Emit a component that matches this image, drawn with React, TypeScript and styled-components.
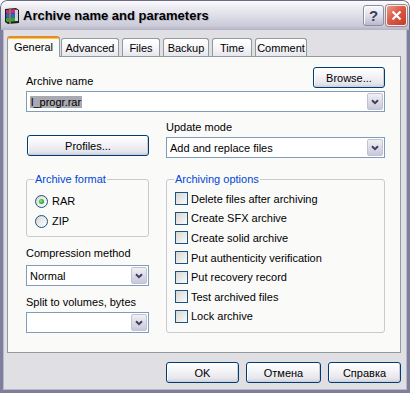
import React from "react";
import styled, { createGlobalStyle, css } from "styled-components";

const GlobalStyle = createGlobalStyle`
  html, body {
    margin: 0;
    padding: 0;
    background: #ffffff;
  }
  body {
    font-family: "Liberation Sans", Arial, sans-serif;
    font-size: 11px;
    color: #000;
  }
  * {
    box-sizing: border-box;
  }
`;

const tabs = [
  { label: "General", w: 53 },
  { label: "Advanced", w: 58 },
  { label: "Files", w: 38 },
  { label: "Backup", w: 46 },
  { label: "Time", w: 40 },
  { label: "Comment", w: 52 },
];

const options = [
  "Delete files after archiving",
  "Create SFX archive",
  "Create solid archive",
  "Put authenticity verification",
  "Put recovery record",
  "Test archived files",
  "Lock archive",
];

const Chevron = () => (
  <svg width="8" height="6" viewBox="0 0 8 6">
    <polyline points="1,1.2 4,4.2 7,1.2" fill="none" stroke="#3f3f5f" strokeWidth="2" />
  </svg>
);

const RarIcon = () => (
  <svg width="18" height="18" viewBox="0 0 18 18">
    <polygon points="2,2 13,1 16,3 16,16 5,17 2,15" fill="#1e1e1e" />
    <polygon points="3,3 13,2 15,3 15,6 4,7 3,6" fill="#c2307e" />
    <polygon points="3,7 14,6 15,7 15,10 4,11 3,10" fill="#2e62cc" />
    <polygon points="3,11 14,10 15,11 15,14 4,15 3,14" fill="#36a43e" />
    <rect x="12" y="3" width="3" height="11" fill="#e6e6e6" opacity="0.85" />
    <rect x="6" y="1" width="2" height="16" fill="#8c7a52" />
  </svg>
);

const App: React.FC = () => {
  return (
    <>
      <GlobalStyle />
      <Window>
        <TitleBar>
          <RarIcon />
          <Title>Archive name and parameters</Title>
          <HelpButton>?</HelpButton>
          <CloseButton>
            <svg width="11" height="11" viewBox="0 0 11 11">
              <path d="M1.5 1.5 L9.5 9.5 M9.5 1.5 L1.5 9.5" stroke="#ffffff" strokeWidth="2.2" />
            </svg>
          </CloseButton>
        </TitleBar>

        <Body>
          <TabStrip>
            {tabs.map((t, i) => (
              <Tab key={t.label} $w={t.w} $active={i === 0}>
                {t.label}
              </Tab>
            ))}
          </TabStrip>

          <Panel>
            <NameRow>
              <Label>Archive name</Label>
              <Button $w={72}>Browse...</Button>
            </NameRow>
            <Combo $mt={3}>
              <ComboText>
                <Selected>l_progr.rar</Selected>
              </ComboText>
              <DropButton>
                <Chevron />
              </DropButton>
            </Combo>

            <Columns>
              <Column>
                <Button $w={122} $mt={23} $ml={1}>
                  Profiles...
                </Button>
                <Group $h={64} $mt={17}>
                  <GroupTitle>Archive format</GroupTitle>
                  <OptionList $pt={5}>
                    <OptionRow $h={20}>
                      <Radio $checked />
                      <OptionText $gap={4}>RAR</OptionText>
                    </OptionRow>
                    <OptionRow $h={20}>
                      <Radio />
                      <OptionText $gap={4}>ZIP</OptionText>
                    </OptionRow>
                  </OptionList>
                </Group>
                <Label $mt={10}>Compression method</Label>
                <Combo $mt={5}>
                  <ComboText>Normal</ComboText>
                  <DropButton>
                    <Chevron />
                  </DropButton>
                </Combo>
                <Label $mt={10}>Split to volumes, bytes</Label>
                <Combo $mt={3}>
                  <ComboText />
                  <DropButton>
                    <Chevron />
                  </DropButton>
                </Combo>
              </Column>

              <Column>
                <Label $mt={9}>Update mode</Label>
                <Combo $mt={3}>
                  <ComboText>Add and replace files</ComboText>
                  <DropButton>
                    <Chevron />
                  </DropButton>
                </Combo>
                <Group $h={160} $mt={15}>
                  <GroupTitle>Archiving options</GroupTitle>
                  <OptionList $pt={3}>
                    {options.map((o) => (
                      <OptionRow key={o} $h={19.6}>
                        <CheckBox />
                        <OptionText $gap={3}>{o}</OptionText>
                      </OptionRow>
                    ))}
                  </OptionList>
                </Group>
              </Column>
            </Columns>
          </Panel>

          <Footer>
            <Button $w={73}>OK</Button>
            <Button $w={75}>Отмена</Button>
            <Button $w={73}>Справка</Button>
          </Footer>
        </Body>
      </Window>
    </>
  );
};

const Window = styled.div`
  width: 410px;
  height: 393px;
  display: flex;
  flex-direction: column;
  border-radius: 7px 7px 0 0;
  overflow: hidden;
  background: #e0dfe3;
`;

const TitleBar = styled.div`
  height: 30px;
  flex: none;
  display: flex;
  align-items: center;
  padding: 0 2px 0 2px;
  border: 1px solid #6c6c88;
  border-bottom: none;
  border-radius: 7px 7px 0 0;
  background: linear-gradient(
    #fcfcfe 0%,
    #ececf2 22%,
    #dcdce6 55%,
    #cbcbd9 85%,
    #b3b3c6 100%
  );
`;

const Title = styled.div`
  flex: 1;
  margin-left: 2px;
  font-size: 13px;
  font-weight: bold;
  color: #000;
  text-shadow: 1px 1px 0 #b9b9c8;
  white-space: nowrap;
`;

const CaptionButton = styled.div`
  width: 21px;
  height: 21px;
  border-radius: 3px;
  display: flex;
  align-items: center;
  justify-content: center;
`;

const HelpButton = styled(CaptionButton)`
  margin-right: 2px;
  border: 1px solid #8c8ca8;
  background: linear-gradient(#f8f8fb 0%, #dcdce6 55%, #b9b9cc 100%);
  box-shadow: inset 1px 1px 0 #ffffff;
  font-size: 15px;
  font-weight: bold;
  color: #3a3a5a;
`;

const CloseButton = styled(CaptionButton)`
  border: 1px solid #f4f0f0;
  background: linear-gradient(135deg, #ee9a88 0%, #dc5a46 45%, #c23b28 100%);
  box-shadow: 0 0 0 1px #9a8a90;
`;

const Body = styled.div`
  flex: 1;
  display: flex;
  flex-direction: column;
  padding: 6px 6px 7px 4px;
  border: 3px solid #7f7f9c;
  border-top: none;
  box-shadow: inset 1px 0 0 #b8b8cc, inset -1px 0 0 #b8b8cc, inset 0 -1px 0 #b8b8cc;
`;

const TabStrip = styled.div`
  height: 20px;
  display: flex;
  align-items: flex-end;
`;

const Tab = styled.div<{ $w: number; $active?: boolean }>`
  width: ${(p) => p.$w}px;
  height: 18px;
  margin-left: 3px;
  display: flex;
  align-items: center;
  justify-content: center;
  border: 1px solid #919b9c;
  border-bottom: none;
  border-radius: 3px 3px 0 0;
  background: linear-gradient(#ffffff 0%, #f6f6f9 50%, #e6e6ee 100%);
  white-space: nowrap;

  ${(p) =>
    p.$active &&
    css`
      height: 21px;
      margin-left: 0;
      margin-bottom: -1px;
      margin-right: -2px;
      position: relative;
      z-index: 1;
      border-top: 2px solid #e68b2c;
      box-shadow: inset 0 1px 0 #ffc73c;
      background: #fafaf9;
      padding-bottom: 1px;
    `}

  &:nth-child(2) {
    margin-left: 3px;
  }
`;

const Panel = styled.div`
  height: 297px;
  border: 1px solid #919b9c;
  background: #fafaf9;
  padding: 10px 15px 0 18px;
`;

const NameRow = styled.div`
  display: flex;
  align-items: flex-end;
  justify-content: space-between;
`;

const Label = styled.div<{ $mt?: number }>`
  margin-top: ${(p) => p.$mt ?? 0}px;
  line-height: 13px;
  white-space: nowrap;
`;

const Button = styled.button<{ $w: number; $mt?: number; $ml?: number }>`
  width: ${(p) => p.$w}px;
  height: 21px;
  margin: ${(p) => p.$mt ?? 0}px 0 0 ${(p) => p.$ml ?? 0}px;
  padding: 0;
  border: 1px solid #003c74;
  border-radius: 3px;
  background: linear-gradient(#ffffff 0%, #f5f5f8 40%, #e6e6ec 80%, #d2d2dc 100%);
  box-shadow: inset 1px 1px 0 #ffffff, inset -1px -1px 0 #cfcfda;
  font-family: "Liberation Sans", Arial, sans-serif;
  font-size: 11px;
  color: #000;
`;

const Combo = styled.div<{ $mt?: number }>`
  height: 21px;
  margin-top: ${(p) => p.$mt ?? 0}px;
  display: flex;
  align-items: stretch;
  padding: 1px;
  border: 1px solid #7f9db9;
  background: #ffffff;
`;

const ComboText = styled.div`
  flex: 1;
  display: flex;
  align-items: center;
  padding-left: 2px;
  white-space: nowrap;
  overflow: hidden;
`;

const Selected = styled.span`
  background: #a9a9b2;
  padding: 0 1px;
  line-height: 12px;
`;

const DropButton = styled.div`
  width: 16px;
  flex: none;
  display: flex;
  align-items: center;
  justify-content: center;
  border: 1px solid #c2c2d6;
  border-radius: 2px;
  background: linear-gradient(#f0f0f6 0%, #dcdce8 50%, #c8c8da 100%);
`;

const Columns = styled.div`
  display: grid;
  grid-template-columns: 123px 219px;
  column-gap: 17px;
`;

const Column = styled.div`
  display: flex;
  flex-direction: column;
`;

const Group = styled.fieldset<{ $h: number; $mt: number }>`
  height: ${(p) => p.$h}px;
  margin: ${(p) => p.$mt}px 0 0 0;
  padding: 0 0 0 8px;
  border: 1px solid #c9c9d0;
  border-radius: 3px;
  min-width: 0;
`;

const GroupTitle = styled.legend`
  padding: 0 1px;
  margin-left: -1px;
  line-height: 13px;
  font-size: 11px;
  color: #0046d5;
`;

const OptionList = styled.div<{ $pt: number }>`
  padding-top: ${(p) => p.$pt}px;
  display: flex;
  flex-direction: column;
`;

const OptionRow = styled.div<{ $h: number }>`
  height: ${(p) => p.$h}px;
  display: flex;
  align-items: center;
`;

const OptionText = styled.span<{ $gap: number }>`
  margin-left: ${(p) => p.$gap}px;
  white-space: nowrap;
`;

const CheckBox = styled.span`
  width: 13px;
  height: 13px;
  flex: none;
  border: 1px solid #1c5180;
  background: linear-gradient(135deg, #d6d6d2 0%, #ececea 60%, #fbfbfa 100%);
`;

const Radio = styled.span<{ $checked?: boolean }>`
  width: 13px;
  height: 13px;
  flex: none;
  border: 1px solid #1c5180;
  border-radius: 50%;
  display: flex;
  align-items: center;
  justify-content: center;
  background: linear-gradient(135deg, #d6d6d2 0%, #efefed 60%, #ffffff 100%);

  &::after {
    content: "";
    width: 5px;
    height: 5px;
    border-radius: 50%;
    background: ${(p) =>
      p.$checked ? "radial-gradient(circle at 40% 40%, #8ee08e, #21a121 70%)" : "transparent"};
  }
`;

const Footer = styled.div`
  margin-top: 9px;
  height: 21px;
  display: flex;
  justify-content: flex-end;
  gap: 7px;
`;

export default App;
